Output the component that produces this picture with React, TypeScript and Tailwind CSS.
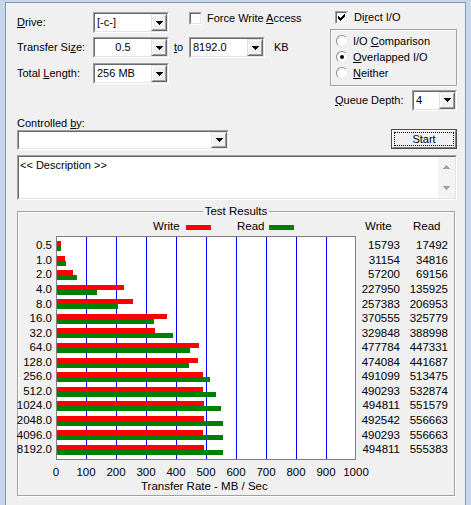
import React from "react";

const labels = ["0.5","1.0","2.0","4.0","8.0","16.0","32.0","64.0","128.0","256.0","512.0","1024.0","2048.0","4096.0","8192.0"];
const writes = [15793,31154,57200,227950,257383,370555,329848,477784,474084,491099,490293,494811,492542,490293,494811];
const reads = [17492,34816,69156,135925,206953,325779,388998,447331,441687,513475,532874,551579,556663,556663,555383];
const ticks = ["0","100","200","300","400","500","600","700","800","900","1000"];

function DropBtn() {
  return (
    <div className="w-[16px] self-stretch flex border border-t-[#e3e3e3] border-l-[#e3e3e3] border-r-[#696969] border-b-[#696969]">
      <div className="flex-1 flex items-center justify-center bg-[#f0f0f0] border border-t-white border-l-white border-r-[#a0a0a0] border-b-[#a0a0a0]">
        <svg width="7" height="4" viewBox="0 0 7 4" shapeRendering="crispEdges">
          <polygon points="0,0 7,0 3.5,4" fill="#000" />
        </svg>
      </div>
    </div>
  );
}

function Combo({ w, h, text, center }: { w: string; h: string; text: string; center?: boolean }) {
  return (
    <div className={`${w} ${h} flex shrink-0 border border-t-[#a0a0a0] border-l-[#a0a0a0] border-r-white border-b-white`}>
      <div className="flex flex-1 bg-white border border-t-[#696969] border-l-[#696969] border-r-[#e3e3e3] border-b-[#e3e3e3]">
        <div className={`flex-1 flex items-center px-[2px] text-[11px] leading-none ${center ? "justify-center" : ""}`}>{text}</div>
        <DropBtn />
      </div>
    </div>
  );
}

function Check({ checked }: { checked?: boolean }) {
  return (
    <div className="w-[13px] h-[13px] shrink-0 flex border border-t-[#a0a0a0] border-l-[#a0a0a0] border-r-white border-b-white">
      <div className="flex-1 bg-white border border-t-[#696969] border-l-[#696969] border-r-[#e3e3e3] border-b-[#e3e3e3] flex items-center justify-center">
        {checked && (
          <svg width="7" height="7" viewBox="0 0 7 7" shapeRendering="crispEdges">
            <path d="M0 2 L2 4 L6 0 L7 0 L7 2 L2 7 L0 5 Z" fill="#000" />
          </svg>
        )}
      </div>
    </div>
  );
}

function Radio({ sel }: { sel?: boolean }) {
  return (
    <div className="w-[12px] h-[12px] shrink-0 rounded-full bg-white border border-t-[#8a8a8a] border-l-[#8a8a8a] border-r-[#e6e6e6] border-b-[#e6e6e6] flex items-center justify-center">
      {sel && <div className="w-[4px] h-[4px] rounded-full bg-black" />}
    </div>
  );
}

export default function App() {
  const pairGap = "gap-[4.57px]";
  return (
    <div className="w-[471px] h-[505px] bg-[#c6d7ec] overflow-hidden font-['Liberation_Sans',Arial,sans-serif] text-[11px] text-black">
      <div className="ml-[5px] mt-[2px] w-[461px] h-[503px] border-l border-t border-r border-[#8796ab] bg-[#f0f0f0] flex flex-col">
        {/* top section */}
        <div className="flex h-[110px]">
          <div className="w-[324px] pl-[11px] pt-[9px] flex flex-col">
            <div className="flex items-start h-[21px]">
              <div className="w-[76px] h-[21px] flex items-center"><span><span className="underline">D</span>rive:</span></div>
              <Combo w="w-[76px]" h="h-[21px]" text="[-c-]" />
              <div className="ml-[20px] flex items-center h-[13px]">
                <Check />
                <span className="ml-[5px] leading-[13px]">Force Write <span className="underline">A</span>ccess</span>
              </div>
            </div>
            <div className="flex items-center h-[21px] mt-[4px]">
              <div className="w-[76px]">Transfer Si<span className="underline">z</span>e:</div>
              <Combo w="w-[76px]" h="h-[21px]" text="0.5" center />
              <div className="ml-[5px] w-[15px]"><span className="underline">t</span>o</div>
              <Combo w="w-[76px]" h="h-[21px]" text="8192.0" />
              <div className="ml-[9px]">KB</div>
            </div>
            <div className="flex items-center h-[21px] mt-[5px]">
              <div className="w-[76px]">Total <span className="underline">L</span>ength:</div>
              <Combo w="w-[76px]" h="h-[21px]" text="256 MB" />
            </div>
          </div>
          <div className="w-[127px] pt-[8px] flex flex-col">
            <div className="flex items-center h-[13px] pl-[5px]">
              <Check checked />
              <span className="ml-[6px] leading-[13px]">Di<span className="underline">r</span>ect I/O</span>
            </div>
            <div className="mt-[5px] h-[57px] w-[127px] border border-[#a0a0a0] shadow-[inset_1px_1px_0_#fff,1px_1px_0_#fff] pt-[3px] pl-[5px] flex flex-col">
              <div className="h-[16px] flex items-center"><Radio /><span className="ml-[5px]">I/O <span className="underline">C</span>omparison</span></div>
              <div className="h-[16px] flex items-center"><Radio sel /><span className="ml-[5px]"><span className="underline">O</span>verlapped I/O</span></div>
              <div className="h-[16px] flex items-center"><Radio /><span className="ml-[5px]"><span className="underline">N</span>either</span></div>
            </div>
            <div className="mt-[4px] h-[20px] flex items-center pl-[5px]">
              <div className="w-[77px]"><span className="underline">Q</span>ueue Depth:</div>
              <Combo w="w-[45px]" h="h-[21px]" text="4" />
            </div>
          </div>
        </div>

        {/* controlled by */}
        <div className="mt-[3px] h-[14px] pl-[11px] leading-[14px]">Controlled <span className="underline">b</span>y:</div>
        <div className="h-[20px] pl-[11px] flex items-start">
          <Combo w="w-[212px]" h="h-[20px]" text="" />
          <div className="ml-[162px] -mt-[1px] w-[66px] h-[20px] flex border border-[#4a4a4a]">
            <div className="flex-1 flex border border-t-white border-l-white border-r-[#808080] border-b-[#808080] bg-[#f0f0f0] p-[1px]">
              <div className="flex-1 border border-dotted border-black flex items-center justify-center leading-none">Start</div>
            </div>
          </div>
        </div>

        {/* description */}
        <div className="ml-[11px] mt-[5px] w-[440px] h-[45px] flex border border-t-[#a0a0a0] border-l-[#a0a0a0] border-r-white border-b-white">
          <div className="flex flex-1 bg-white border border-t-[#696969] border-l-[#696969] border-r-[#e3e3e3] border-b-[#e3e3e3]">
            <div className="flex-1 pl-[1px] pt-[2px] leading-[13px]">&lt;&lt; Description &gt;&gt;</div>
            <div className="w-[17px] bg-[#f3f3f3] flex flex-col items-center justify-between py-[8px]">
              <svg width="7" height="4" viewBox="0 0 7 4" shapeRendering="crispEdges"><polygon points="3.5,0 7,4 0,4" fill="#a3a3a3" /></svg>
              <svg width="7" height="4" viewBox="0 0 7 4" shapeRendering="crispEdges"><polygon points="0,0 7,0 3.5,4" fill="#a3a3a3" /></svg>
            </div>
          </div>
        </div>

        {/* test results */}
        <div className="ml-[11px] mt-[11px] w-[438px] h-[285px] border border-[#a0a0a0] shadow-[inset_1px_1px_0_#fff,1px_1px_0_#fff] flex flex-col">
          <div className="-mt-[7px] mx-auto px-[2px] h-[13px] leading-[13px] bg-[#f0f0f0] text-[11.5px]">Test Results</div>
          <div className="mt-[2px] h-[14px] flex items-center text-[11.5px]">
            <div className="ml-[135px] w-[33px]">Write</div>
            <div className="w-[25px] h-[5px] bg-[#ff0000]" />
            <div className="ml-[26px] w-[32px]">Read</div>
            <div className="w-[25px] h-[5px] bg-[#008000]" />
            <div className="ml-[71px] w-[48px]">Write</div>
            <div>Read</div>
          </div>
          <div className="mt-[2px] flex items-start text-[11.5px]">
            <div className={`w-[34px] pt-[5px] flex flex-col ${pairGap}`}>
              {labels.map((l) => (
                <div key={l} className="h-[10px] flex items-center justify-end leading-none whitespace-nowrap">{l}</div>
              ))}
            </div>
            <div className={`ml-[4px] w-[300px] h-[224px] border border-[#808080] bg-white bg-[image:repeating-linear-gradient(to_right,transparent_0px,transparent_29px,#0000ff_29px,#0000ff_30px)] py-[4px] flex flex-col ${pairGap}`}>
              {labels.map((l, i) => (
                <div key={l} className="h-[10px] flex flex-col">
                  <div className="h-[5px] bg-[#ff0000]" style={{ width: Math.round(writes[i] * 0.0003) - 1 }} />
                  <div className="h-[5px] bg-[#008000]" style={{ width: Math.round(reads[i] * 0.0003) - 1 }} />
                </div>
              ))}
            </div>
            <div className={`w-[44px] pt-[5px] flex flex-col ${pairGap}`}>
              {writes.map((v, i) => (
                <div key={i} className="h-[10px] flex items-center justify-end leading-none">{v}</div>
              ))}
            </div>
            <div className={`w-[48px] pt-[5px] flex flex-col ${pairGap}`}>
              {reads.map((v, i) => (
                <div key={i} className="h-[10px] flex items-center justify-end leading-none">{v}</div>
              ))}
            </div>
          </div>
          <div className="mt-[6px] h-[14px] ml-[38px] flex items-center gap-[30px] text-[11.5px]">
            {ticks.map((t) => (
              <div key={t} className="w-0 flex justify-center">
                <span className="whitespace-nowrap">{t}</span>
              </div>
            ))}
          </div>
          <div className="h-[14px] ml-[123px] flex items-center whitespace-nowrap text-[11.5px]">Transfer Rate - MB / Sec</div>
        </div>
      </div>
    </div>
  );
}
